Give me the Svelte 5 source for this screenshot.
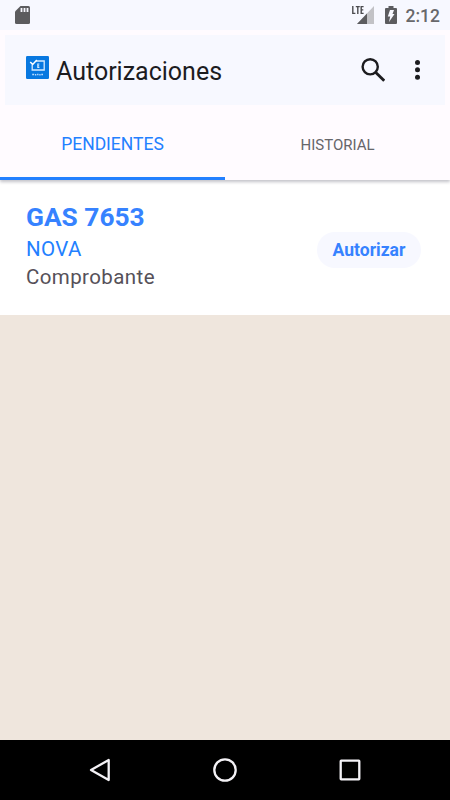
<script lang="ts">
	let active = $state(0);
	const tabs = ["Pendientes", "Historial"];
	const items = [{ title: "GAS 7653", company: "NOVA", kind: "Comprobante" }];
</script>

<div class="screen">
	<div class="status">
		<svg class="sd" width="15" height="18" viewBox="0 0 15 18">
			<path d="M5.5 0H13.5Q15 0 15 1.5V16.5Q15 18 13.5 18H1.5Q0 18 0 16.5V5.5Z" fill="#5c5c5f" />
			<path d="M6.5 2v4M9.5 2v4M12.5 2v4" stroke="#f7f8ff" stroke-width="1.8" />
		</svg>
		<div class="status-right">
			<svg width="23" height="20" viewBox="0 0 23 20">
				<path d="M22 1V19H5Z" fill="#c2c2c6" />
				<path d="M15 8.4V19H5Z" fill="#5c5c5f" />
				<path
					d="M.8 1V8.4H3.4M3.8 1.6H7.8M5.8 1.6V9M11.6 1.6H9.2V8.4H11.6M9.2 4.9H11.3"
					fill="none"
					stroke="#4b4b4f"
					stroke-width="1.4"
				/>
			</svg>
			<svg class="battery" width="12" height="18" viewBox="0 0 12 18">
				<path d="M3.5 0H8.5V2H11Q12 2 12 3V17Q12 18 11 18H1Q0 18 0 17V3Q0 2 1 2H3.5Z" fill="#5c5c5f" />
				<path d="M5 4H9L7.5 8H9.5L4 16L5.2 10.5H2.8Z" fill="#f7f8ff" />
			</svg>
			<span class="clock">2:12</span>
		</div>
	</div>

	<header>
		<div class="toolbar">
			<svg class="logo" width="23" height="23" viewBox="0 0 23 23">
				<rect width="23" height="23" rx="1.2" fill="#0878e0" />
				<path
					d="M10 5H18.2V14H6.2V8.5"
					fill="none"
					stroke="#d5eaff"
					stroke-width="1.3"
				/>
				<path d="M4.2 6L6.7 8.4L10.8 4" fill="none" stroke="#fff" stroke-width="1.5" />
				<path d="M13.4 8H11.8V11.4H13.4M11.8 9.7H13.2" fill="none" stroke="#d5eaff" stroke-width="1.1" />
				<path
					d="M6.2 18.4h2M9 18.7h1.3M11.1 18.5h1.4M13.3 18.7h1.3M15.3 18.6h1.7"
					stroke="#b9dcff"
					stroke-width="1.5"
				/>
			</svg>
			<h1>Autorizaciones</h1>
			<button class="icon" aria-label="Buscar">
				<svg width="24" height="24" viewBox="0 0 24 24" fill="none" stroke="#1c1c1f">
					<circle cx="9.2" cy="8.8" r="7.6" stroke-width="2.4" />
					<path d="M14.8 14.4L23.2 22.8" stroke-width="2.8" />
				</svg>
			</button>
			<button class="icon more" aria-label="Más opciones">
				<svg width="6" height="20" viewBox="0 0 6 20" fill="#1c1c1f">
					<circle cx="3.5" cy="2.6" r="2.5" />
					<circle cx="3.5" cy="9.8" r="2.5" />
					<circle cx="3.5" cy="17.2" r="2.5" />
				</svg>
			</button>
		</div>
		<nav class="tabs">
			{#each tabs as tab, i}
				<button class="tab" class:active={active === i} onclick={() => (active = i)}>{tab}</button>
			{/each}
		</nav>
	</header>

	<main>
		{#each items as item}
			<div class="card">
				<div>
					<div class="title">{item.title}</div>
					<div class="company">{item.company}</div>
					<div class="kind">{item.kind}</div>
				</div>
				<button class="authorize">Autorizar</button>
			</div>
		{/each}
	</main>

	<div class="navbar">
		<svg width="24" height="26" viewBox="0 0 24 26">
			<path d="M3 13L20.7 3V23Z" />
		</svg>
		<svg width="26" height="26" viewBox="0 0 26 26">
			<circle cx="13" cy="13" r="10.7" />
		</svg>
		<svg width="24" height="26" viewBox="0 0 24 26">
			<rect x="2.7" y="3.7" width="18.6" height="18.6" rx=".5" />
		</svg>
	</div>
</div>

<style>
	:global(body) {
		margin: 0;
	}

	.screen {
		display: flex;
		flex-direction: column;
		height: 800px;
		background: #efe6dd;
		font-family: Roboto, sans-serif;
	}

	button {
		padding: 0;
		border: 0;
		background: none;
		font-family: inherit;
	}

	svg {
		display: block;
		flex: none;
	}

	.status {
		position: relative;
		z-index: 1;
		display: flex;
		align-items: center;
		justify-content: space-between;
		box-sizing: border-box;
		height: 30px;
		padding: 0 10px 0 15px;
		background: #f7f8ff;
	}

	.status-right {
		display: flex;
		align-items: center;
	}

	.battery {
		margin: 0 9px 0 10px;
	}

	.clock {
		padding-top: 2px;
		font-size: 17.5px;
		font-weight: 500;
		line-height: 28px;
		color: #68686b;
	}

	header {
		position: relative;
		background: #fffbff;
		box-shadow: 0 2px 3px rgba(40, 40, 60, 0.28);
	}

	.toolbar {
		display: flex;
		align-items: center;
		box-sizing: border-box;
		height: 70px;
		margin: 5px 5px 0;
		padding: 0 25px 0 21px;
		background: #f7f8ff;
	}

	.logo {
		margin-bottom: 5px;
	}

	h1 {
		flex: 1;
		margin: 4px 0 0 7px;
		font-size: 25px;
		font-weight: 400;
		line-height: 30px;
		color: #1c1c1f;
	}

	.more {
		margin-left: 29px;
	}

	.tabs {
		display: flex;
		height: 75px;
	}

	.tab {
		flex: 1;
		padding-top: 7px;
		border-bottom: 3px solid transparent;
		font-size: 15px;
		font-weight: 400;
		text-transform: uppercase;
		color: #66666a;
	}

	.tab.active {
		padding-top: 6px;
		border-bottom-color: #2380ff;
		font-size: 17.5px;
		color: #2380ff;
	}

	main {
		flex: 1;
	}

	.card {
		display: flex;
		align-items: center;
		justify-content: space-between;
		box-sizing: border-box;
		height: 135px;
		padding: 0 29px 3px 26px;
		background: #fff;
	}

	.title {
		padding-bottom: 2px;
		font-size: 26.3px;
		font-weight: 700;
		line-height: 30px;
		color: #3682ff;
	}

	.company {
		padding-top: 1px;
		font-size: 20.5px;
		line-height: 29px;
		letter-spacing: 0.4px;
		color: #2380ff;
	}

	.kind {
		font-size: 20.5px;
		line-height: 27px;
		letter-spacing: 0.4px;
		color: #565159;
	}

	.authorize {
		width: 104px;
		height: 36px;
		margin-top: 8px;
		border-radius: 18px;
		background: #f7f8ff;
		font-size: 17.5px;
		font-weight: 700;
		color: #3682ff;
	}

	.navbar {
		display: flex;
		align-items: center;
		justify-content: space-between;
		height: 60px;
		padding: 0 88px;
		background: #000;
	}

	.navbar svg {
		fill: none;
		stroke: #f4f2f6;
		stroke-width: 2.3;
		stroke-linejoin: round;
	}
</style>
